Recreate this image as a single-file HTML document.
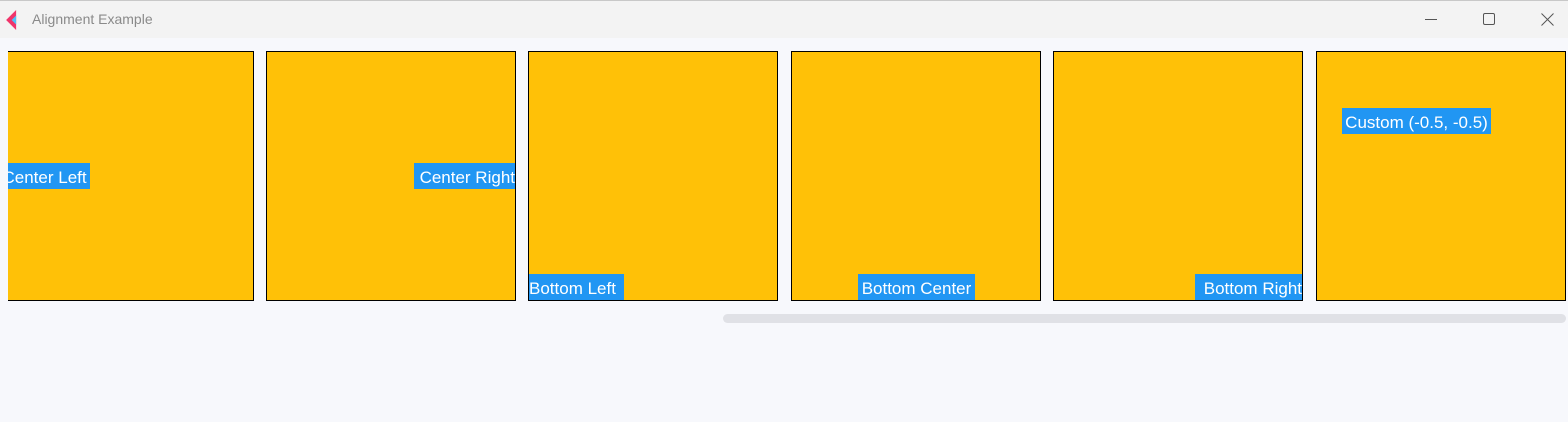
<!DOCTYPE html>
<html><head><style>
body{margin:0;width:1568px;height:422px;background:#f7f8fc;position:relative;overflow:hidden;font-family:"Liberation Sans",sans-serif}
.title{position:absolute;left:0;top:0;width:1568px;height:38px;background:#f3f3f3;border-top:1px solid #c8c8c8;box-sizing:border-box}
.title span{position:absolute;left:32px;top:10px;font-size:14px;color:#8a8a8a}
.clip{position:absolute;left:8px;top:38px;width:1560px;height:300px;overflow:hidden}
.box{position:absolute;top:13px;width:248px;height:248px;border:1px solid #000;background:#ffc107}
.l{position:absolute;height:26px;line-height:30px;background:#2196f3;color:#fff;font-size:17px;white-space:nowrap;overflow:hidden}
.sb{position:absolute;left:723px;top:314px;width:843px;height:9px;border-radius:5px;background:#e0e1e6}
</style></head><body>
<div class="title">
<svg style="position:absolute;left:5px;top:9px" width="20" height="20" viewBox="0 0 18 18"><path d="M10 0L1 9l9 9V0z" fill="#f0346a"/><path d="M10 5L6 9l4 4z" fill="#4fc3f7"/></svg>
<span>Alignment Example</span>
<svg style="position:absolute;left:1425px;top:12px" width="12" height="12"><path d="M0 6.5h12" stroke="#555" stroke-width="1"/></svg>
<svg style="position:absolute;left:1483px;top:12px" width="12" height="12"><rect x="0.5" y="0.5" width="11" height="11" rx="1.5" fill="none" stroke="#555"/></svg>
<svg style="position:absolute;left:1541px;top:12px" width="13" height="13"><path d="M0.5 0.5l12 12M12.5 0.5l-12 12" stroke="#555"/></svg>
</div>
<div class="clip">
<div class="box" style="left:-4.5px"><div class="l" style="left:0;top:111px;width:85px;text-indent:-2px">Center Left</div></div>
<div class="box" style="left:258px"><div class="l" style="right:0;top:111px;width:101px;text-align:right">Center Right</div></div>
<div class="box" style="left:520px"><div class="l" style="left:0;bottom:0;width:95px">Bottom Left</div></div>
<div class="box" style="left:783px"><div class="l" style="left:66px;bottom:0;width:117px;text-align:center">Bottom Center</div></div>
<div class="box" style="left:1045px"><div class="l" style="right:0;bottom:0;width:107px;text-align:right">Bottom Right</div></div>
<div class="box" style="left:1308px"><div class="l" style="left:25px;top:56px;width:149px;text-align:center">Custom (-0.5, -0.5)</div></div>
</div>
<div class="sb"></div>
</body></html>
